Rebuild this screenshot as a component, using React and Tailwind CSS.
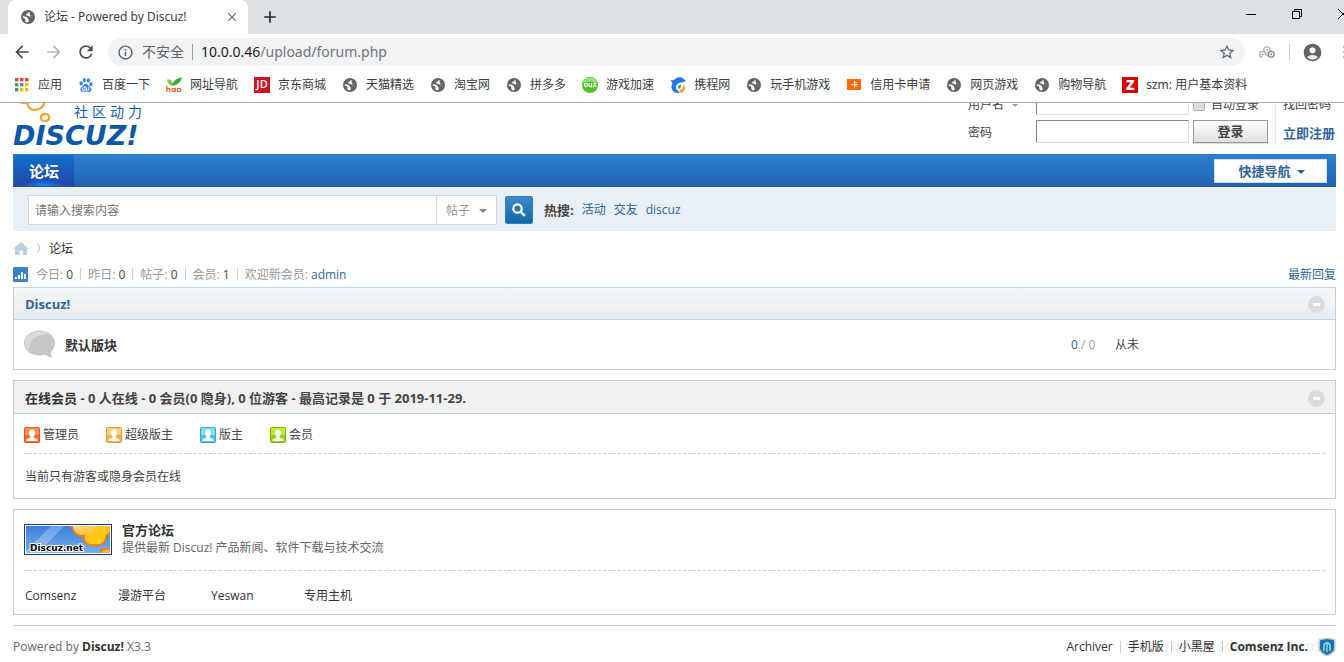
import React, { useState } from 'react';
import { MdArrowBack, MdArrowForward, MdRefresh, MdInfoOutline, MdStarBorder, MdAccountCircle, MdAdd, MdClose } from 'react-icons/md';
import { SiBaidu } from 'react-icons/si';

const Globe = () => (
  <svg viewBox="0 0 14 14" className="size-[14px] shrink-0">
    <circle cx="7" cy="7" r="7" fill="#5f6368" />
    <path d="M8.200 1.800L6.800 3.200c-.8.300-1.600.5-1.600 1.400 0 1 .8 1.400 2 1.400 1.400 0 2 .8 2 1.800 1.200 0 1.800.5 2.300 1.300.6-1.400.8-2.600.4-4.100-1.300.5-2.300.2-2.900-.6-.5-.9-.2-1.800-.8-2.600z" fill="#fff" />
    <path d="M1.700 6.200c1.600.1 3 .4 4.200 1.100 1 .7.6 1.500 1.500 2 .7.4.6 1.500-.3 3C4 12.300 1.600 9.800 1.700 6.200z" fill="#fff" />
    <path d="M9.200 4.600c1 .8 1.800.9 3 .4.4 1.500.2 2.900-.6 4.100-.5-.8-1.200-1.300-2.400-1.300z" fill="#5f6368" />
    <path d="M1.500 7.500c1.200.1 2.200.7 2.800 1.800.4.8.2 1.900-.1 2.400C2.500 10.800 1.500 9.300 1.500 7.500z" fill="#5f6368" />
  </svg>
);

const AppsIcon = () => (
  <svg viewBox="0 0 14 14" className="size-[14px]">
    {['#ea4335', '#ea4335', '#ea4335', '#34a853', '#4285f4', '#fbbc05', '#34a853', '#fbbc05', '#fbbc05'].map((c, i) => (
      <rect key={i} x={(i % 3) * 5} y={Math.floor(i / 3) * 5} width="3.4" height="3.4" fill={c} />
    ))}
  </svg>
);

const HaoIcon = () => (
  <svg viewBox="0 0 16 16" className="size-4">
    <path d="M1.5 2.5C4 2.5 6 4 6.6 6.2 8.4 3 11.8.9 16 .6 15.2 5.2 11 8.6 6 8.7 3.200 7.600 1.700 5.500 1.500 2.500z" fill="#3fae3a" />
    <path d="M1.500 2.500c3 .2 4.800 2 5.100 4.500L6 8.700C3.400 8 1.700 6 1.500 2.500z" fill="#8cc63f" />
    <g fill="none" stroke="#f26522" strokeWidth="1.200">
      <path d="M.8 8.500V15M.8 12.300c.6-1.400 3.200-1.400 3.200.4V15" />
      <ellipse cx="7.400" cy="13" rx="1.500" ry="1.600" />
      <path d="M9.200 11V15" />
      <ellipse cx="13" cy="13" rx="1.900" ry="1.600" />
    </g>
  </svg>
);

const JdIcon = () => (
  <span className="flex size-4 items-center justify-center bg-[#c81623] font-['Open_Sans'] text-[11px] font-semibold text-white">JD</span>
);

const SpeedIcon = () => (
  <svg viewBox="0 0 16 16" className="size-4">
    <circle cx="8" cy="8" r="8" fill="#4fc22b" />
    <path d="M1 5.500a7.500 7.500 0 0 1 14 0C10 4 6 4 1 5.500z" fill="#9be27f" />
    <g fill="none" stroke="#fff" strokeWidth="1.100">
      <circle cx="3.900" cy="8" r="1.600" />
      <path d="M7 6v2.600c0 1.300 2.500 1.300 2.500 0V6M9.500 8.500v2M11 6.500h3.500M12.700 5v2L11 10.500M12.700 7.500l1.900 2.500" />
    </g>
  </svg>
);

const DolphinIcon = () => (
  <svg viewBox="0 0 16 16" className="size-4">
    <path d="M.5 3.200C3 3.700 4.200 2.600 6 1.400 8.500-.2 12 0 14.200 2.400l1.500 1.400-2 1.400C10.500 4.800 6.800 6 6 9c-.4 2.200.6 4 2.300 4.600L9 16c-4.500.3-7.500-2.600-7.500-6 0-1.400.3-2.600 1-3.700z" fill="#2577e3" />
    <path d="M9 16c3.500-.3 6-2.500 6-5.300 0-1.300-.6-2.500-1.600-3.100.5 2.500-.6 5-3.600 5.700z" fill="#ff9a14" />
    <path d="M8 9.500c1-.6 1.500-1.500 3.200-1.700-.3 2-1.200 3.600-2.700 4.600z" fill="#2577e3" />
  </svg>
);

const CardIcon = () => (
  <span className="flex h-[11px] w-[14px] items-center justify-center bg-[#ff6a00]">
    <svg viewBox="0 0 8 8" className="size-[7px]">
      <path d="M4 0v8M4 2h3M0 4h8M4 4.500l3 2" stroke="#fff" fill="none" />
    </svg>
  </span>
);

const ZIcon = () => (
  <span className="flex size-4 items-center justify-center bg-[#d80000] font-['Open_Sans'] text-[14px] font-extrabold text-white">Z</span>
);

const bookmarks = [
  { label: '应用', icon: <AppsIcon /> },
  { label: '百度一下', icon: <SiBaidu className="size-[14px] text-[#3385ff]" /> },
  { label: '网址导航', icon: <HaoIcon /> },
  { label: '京东商城', icon: <JdIcon /> },
  { label: '天猫精选', icon: <Globe /> },
  { label: '淘宝网', icon: <Globe /> },
  { label: '拼多多', icon: <Globe /> },
  { label: '游戏加速', icon: <SpeedIcon /> },
  { label: '携程网', icon: <DolphinIcon /> },
  { label: '玩手机游戏', icon: <Globe /> },
  { label: '信用卡申请', icon: <CardIcon /> },
  { label: '网页游戏', icon: <Globe /> },
  { label: '购物导航', icon: <Globe /> },
  { label: 'szm: 用户基本资料', icon: <ZIcon /> },
];

const stats = [
  ['今日', '0'],
  ['昨日', '0'],
  ['帖子', '0'],
  ['会员', '1'],
];

const roles = [
  { label: '管理员', from: '#ff9257', to: '#f4511e' },
  { label: '超级版主', from: '#ffd071', to: '#e5973a' },
  { label: '版主', from: '#7fe0fb', to: '#2fa9d6' },
  { label: '会员', from: '#b9f01e', to: '#7cb800' },
];

function Browser() {
  return (
    <div className="border-b border-[#b0b0b0] bg-white font-['Noto_Sans','Noto_Sans_CJK_SC',sans-serif] text-[12px] text-[#3c4043]">
      <div className="flex h-[34px] overflow-hidden bg-[#dee1e6] pl-2">
        <div className="flex w-60 items-center rounded-t-lg bg-white pr-[9px] pl-[13px]">
          <Globe />
          <span className="ml-[9px] flex-1 whitespace-nowrap">论坛 - Powered by Discuz!</span>
          <button aria-label="关闭标签页"><MdClose className="size-[14px] text-[#5f6368]" /></button>
        </div>
        <button aria-label="新标签页" className="ml-3"><MdAdd className="size-5 text-[#2b2d30]" /></button>
        <div className="-mr-[22px] ml-auto flex h-7">
          <button aria-label="最小化" className="flex w-[46px] items-center justify-center">
            <svg viewBox="0 0 10 10" className="size-[10px]"><path d="M0 5.500h10" stroke="#000" /></svg>
          </button>
          <button aria-label="还原" className="flex w-[46px] items-center justify-center">
            <svg viewBox="0 0 10 10" className="size-[10px]"><path d="M.5 2.500h7v7h-7zM2.500 2.500v-2h7v7h-2" stroke="#000" fill="none" /></svg>
          </button>
          <button aria-label="关闭" className="flex w-[46px] items-center justify-center">
            <svg viewBox="0 0 10 10" className="size-[10px]"><path d="M0 0l10 10M10 0L0 10" stroke="#000" /></svg>
          </button>
        </div>
      </div>
      <div className="flex h-9 items-center overflow-hidden pl-3">
        <button aria-label="后退"><MdArrowBack className="size-5 text-[#4a4d51]" /></button>
        <button aria-label="前进" className="ml-3"><MdArrowForward className="size-5 text-[#b4b6b9]" /></button>
        <button aria-label="重新加载" className="ml-3"><MdRefresh className="size-5 text-[#4a4d51]" /></button>
        <div className="ml-3 flex h-7 flex-1 items-center rounded-full bg-[#f1f3f4] pr-[9px] pl-[9px] text-[14px]">
          <MdInfoOutline className="size-[17px] text-[#5f6368]" />
          <span className="ml-2 pb-px text-[#5f6368]">不安全</span>
          <span className="mx-2 h-4 w-px bg-[#9aa0a6]" />
          <span className="pb-[2px] text-[#202124]">10.0.0.46<span className="text-[#73777c]">/upload/forum.php</span></span>
          <button aria-label="收藏" className="ml-auto"><MdStarBorder className="size-[18px] text-[#5f6368]" /></button>
        </div>
        <svg viewBox="0 0 16 12" className="ml-[14px] h-3 w-4" fill="none">
          <circle cx="8" cy="4" r="3.200" stroke="#b8b8b8" strokeWidth="1.300" />
          <circle cx="8" cy="4" r="1" fill="#bbb" />
          <path d="M3.500 11.200a2.900 2.900 0 1 1 2.800-3.500" stroke="#b0b0b0" strokeWidth="1.300" />
          <circle cx="3.600" cy="8.600" r="1" fill="#999" />
          <path d="M6 8l3.500 2.500" stroke="#999" />
          <circle cx="12.200" cy="8.300" r="2.900" stroke="#8a8a8a" strokeWidth="1.300" />
          <circle cx="12.200" cy="8.300" r="1" fill="#888" />
        </svg>
        <span className="mr-3 ml-[14px] h-4 w-px bg-[#cdcfd2]" />
        <MdAccountCircle className="size-[21px] text-[#5f6368]" />
        <svg viewBox="0 0 4 16" className="-mr-[3px] ml-5 h-4 w-1" fill="#5f6368">
          <circle cx="2" cy="3" r="1.500" /><circle cx="2" cy="8" r="1.500" /><circle cx="2" cy="13" r="1.500" />
        </svg>
      </div>
      <nav className="flex h-8 items-center gap-4 overflow-hidden pb-[3px] pl-[14px] whitespace-nowrap">
        {bookmarks.map((b) => (
          <a key={b.label} href="#" className="flex items-center gap-2">
            <span className="flex size-4 shrink-0 items-center justify-center">{b.icon}</span>
            {b.label}
          </a>
        ))}
      </nav>
    </div>
  );
}

function Logo() {
  return (
    <svg viewBox="0 0 130 43" className="h-[43px] w-[130px]" role="img" aria-label="Discuz! 社区动力">
      <g fill="none" stroke="#f3a536" strokeWidth="2.400">
        <path d="M7-1c3 1 5 1.500 7.500 1 .5 4 3 7 7.500 7 5.500-.3 9-4 9.500-8" />
        <ellipse cx="32" cy="14.500" rx="4.200" ry="3.500" />
      </g>
      <text fontSize="14" fill="#1460ad" fontFamily="Noto Sans CJK SC, sans-serif">
        <tspan x="61" y="14">社</tspan><tspan x="79" y="14">区</tspan><tspan x="97" y="14">动</tspan><tspan x="115" y="14">力</tspan>
      </text>
      <text x="0" y="42" fontSize="27" fontWeight="700" fontStyle="italic" fill="#0b58a8" fontFamily="DejaVu Sans, sans-serif">DISCUZ!</text>
    </svg>
  );
}

function Header() {
  return (
    <header className="flex h-[51px] items-end justify-between overflow-hidden">
      <div className="pb-2"><Logo /></div>
      <form className="flex pb-[9px]" onSubmit={(e) => e.preventDefault()}>
        <div className="grid grid-cols-[68px_153px_75px] gap-y-[5px] pb-[2px]">
          <label htmlFor="user" className="flex items-center pt-[3px]">用户名
            <svg viewBox="0 0 6 3" className="ml-2 h-[3px] w-[6px]"><path d="M0 0h6L3 3z" fill="#999" /></svg>
          </label>
          <input id="user" className="h-[23px] border border-t-[#848484] border-r-[#e0e0e0] border-b-[#e0e0e0] border-l-[#848484] px-1" />
          <label className="ml-1 flex items-center gap-[6px] pt-[3px] whitespace-nowrap">
            <input type="checkbox" className="size-3 appearance-none rounded-xs border border-[#b0b0b0] bg-[#dedede]" />
            自动登录
          </label>
          <label htmlFor="pass" className="pt-1">密码</label>
          <input id="pass" type="password" className="h-[23px] border border-t-[#848484] border-r-[#e0e0e0] border-b-[#e0e0e0] border-l-[#848484] px-1" />
          <button className="ml-1 h-[23px] w-[75px] border border-[#999] bg-linear-to-b from-white to-[#e0e0e0] text-[13px] leading-[21px] font-bold shadow-[0_1px_0_#ddd]">登录</button>
        </div>
        <div className="ml-[11px] grid gap-y-[5px] border-l border-[#e3ebf2] pb-[2px] pl-[7px]">
          <a href="#" className="h-[23px] pt-1">找回密码</a>
          <a href="#" className="h-[23px] w-[53px] pt-1 text-[13px] font-bold whitespace-nowrap text-[#336699]">立即注册</a>
        </div>
      </form>
    </header>
  );
}

function Toggle() {
  return (
    <button aria-label="收起" className="mr-[10px] flex size-[17px] items-center justify-center rounded-full bg-[#dcdcdc]">
      <span className="h-[3px] w-[7px] bg-white" />
    </button>
  );
}

function RoleIcon({ from, to }) {
  return (
    <svg viewBox="0 0 16 16" className="size-4">
      <rect x=".5" y=".5" width="15" height="15" rx="1" fill={from} stroke={to} />
      <path d="M1 8h14v7H1z" fill={to} opacity=".6" />
      <path d="M8 2.500c2 0 3 1.400 3 3.200 0 1.500-.6 2.800-1.400 3.500v1.300l3.900 1.700V14h-11v-1.800l3.900-1.700V9.200C5.600 8.500 5 7.200 5 5.700c0-1.800 1-3.200 3-3.200z" fill="#fff" />
    </svg>
  );
}

function PartnerLogo() {
  return (
    <svg viewBox="0 0 88 31" className="h-[31px] w-[88px]" role="img" aria-label="Discuz.net">
      <defs>
        <linearGradient id="sky" x1="0" y1="0" x2="0" y2="1">
          <stop offset="0" stopColor="#3a80dc" /><stop offset="1" stopColor="#75adf0" />
        </linearGradient>
        <linearGradient id="sun" x1="0" y1="0" x2="1" y2="1">
          <stop offset="0" stopColor="#ffe0b0" /><stop offset=".5" stopColor="#ffc21c" /><stop offset="1" stopColor="#ffdf00" />
        </linearGradient>
        <clipPath id="inner"><rect x="2" y="2" width="84" height="27" /></clipPath>
      </defs>
      <rect width="88" height="31" fill="#173f7a" />
      <rect x="1" y="1" width="86" height="29" fill="#fff" />
      <g clipPath="url(#inner)">
        <rect x="2" y="2" width="84" height="27" fill="url(#sky)" />
        <path d="M27 2h13L14 29H2v-2z" fill="#fff" opacity=".25" />
        <path d="M47 0c2 8 6 13 13 12 0 7 4 10 10 9 7 1 12-2 12-9 2-1 4-3 5-5V0z" fill="url(#sun)" stroke="#f07d17" strokeWidth="2" />
        <ellipse cx="83" cy="29" rx="6" ry="4.500" fill="#ffb347" stroke="#f07d17" strokeWidth="2" />
      </g>
      <text x="6" y="27" fontSize="9" fontWeight="700" fill="#000" stroke="#fff" strokeWidth="2" paintOrder="stroke" fontFamily="DejaVu Sans, sans-serif">Discuz.net</text>
    </svg>
  );
}

function App() {
  const [keyword, setKeyword] = useState('');

  return (
    <div className="bg-white">
      <Browser />
      <div className="pr-2 pl-[13px] font-['Open_Sans','Noto_Sans_CJK_SC',sans-serif] text-[12px] leading-[18px] text-[#444]">
        <Header />

        {/* Main nav */}
        <nav className="flex h-[33px] items-center justify-between border-t border-b border-t-[#2b7acd] border-b-[#1d589f] bg-linear-to-b from-[#2e80d3] to-[#2062b0] pr-[9px]">
          <a href="#" className="ml-px flex h-full w-[60px] items-center justify-center bg-[radial-gradient(ellipse_22px_6px_at_bottom,#0a8cff,transparent),linear-gradient(#1072cc,#2344a8)] text-[15px] font-bold text-white">论坛</a>
          <button className="flex h-6 w-[113px] items-center justify-center gap-[6px] border border-[#cfe0f0] bg-white pl-[2px] text-[13px] font-bold text-[#336699]">
            快捷导航
            <svg viewBox="0 0 8 4" className="mt-[2px] h-1 w-2"><path d="M0 0h8L4 4z" fill="#0368b0" /></svg>
          </button>
        </nav>

        {/* Search */}
        <form className="mt-px flex h-[43px] items-center bg-[#e8eff5] pt-px pl-[15px]" onSubmit={(e) => e.preventDefault()}>
          <div className="flex h-[30px] w-[469px] border border-[#cbdce3] bg-white">
            <input
              aria-label="搜索"
              className="min-w-0 flex-1 px-[6px] pt-[2px] outline-none placeholder:text-[#757575]"
              placeholder="请输入搜索内容"
              value={keyword}
              onChange={(e) => setKeyword(e.target.value)}
            />
            <div className="relative w-[60px] border-l border-[#cbdce3]">
              <select aria-label="类型" className="h-full w-full appearance-none pt-[2px] pl-[9px] text-[#999]">
                <option>帖子</option>
              </select>
              <svg viewBox="0 0 8 4" className="pointer-events-none absolute top-[13px] right-[9px] h-1 w-2"><path d="M0 0h8L4 4z" fill="#888" /></svg>
            </div>
          </div>
          <button aria-label="搜索" className="ml-2 flex size-7 items-center justify-center rounded-xs border border-[#2f7fbd] bg-linear-to-b from-[#3a8acb] to-[#1067a5]">
            <svg viewBox="0 0 14 14" className="size-[14px]" fill="none" stroke="#fff">
              <circle cx="5.500" cy="5.500" r="4.200" strokeWidth="2.200" /><path d="M8.800 8.800l4 4" strokeWidth="2.600" />
            </svg>
          </button>
          <strong className="ml-[11px] text-[13px]">热搜:</strong>
          <div className="ml-2 flex gap-2 text-[#336699]">
            <a href="#">活动</a><a href="#">交友</a><a href="#">discuz</a>
          </div>
        </form>

        <div className="flex h-[34px] items-center">
          <a href="#" aria-label="首页">
            <svg viewBox="0 0 16 13" className="h-[13px] w-4"><path d="M8 0l8 7h-2v6h-4V8.500H6.500V13H2V7H0z" fill="#bccfdc" /></svg>
          </a>
          <svg viewBox="0 0 5 10" className="mx-2 h-[10px] w-1"><path d="M1 0l3 5-3 5" stroke="#aaa" fill="none" /></svg>
          <a href="#" className="pt-px text-[#333]">论坛</a>
        </div>

        <div className="mb-1 flex h-[18px] items-center text-[#999]">
          <svg viewBox="0 0 15 15" className="mr-2 size-[15px]">
            <rect width="15" height="15" rx="1" fill="#4080c8" />
            <path d="M2 10h2v2H2zM5 8h2v4H5zM8 5h2v7H8zM11 7h2v5h-2z" fill="#fff" />
          </svg>
          {stats.map(([label, value]) => (
            <span key={label} className="flex items-center">
              <span className="pt-px">{label}: <em className="text-[#444] not-italic">{value}</em></span>
              <i className="mx-[7px] h-3 w-px bg-[#d0d0d0]" />
            </span>
          ))}
          <span className="pt-px">欢迎新会员: <a href="#" className="text-[#336699]">admin</a></span>
          <a href="#" className="ml-auto pt-px text-[#336699]">最新回复</a>
        </div>

        {/* Board list */}
        <section className="border border-[#cdcdcd] border-t-[#c2d5e3]">
          <div className="flex h-8 items-center justify-between border-b border-[#c2d5e3] bg-linear-to-b from-[#f4f8fa] to-[#e6edf2] pt-px">
            <h2 className="pl-[11px] text-[13px] font-bold"><a href="#" className="text-[#336699]">Discuz!</a></h2>
            <Toggle />
          </div>
          <table className="w-full">
            <tbody>
              <tr className="h-[49px]">
                <td className="w-[51px] pl-[10px]">
                  <svg viewBox="0 0 31 29" className="h-[29px] w-[31px]">
                    <path d="M15.500.5C24 .5 31 6 31 13c0 3.600-1.800 6.500-3.800 8.700l.3 6.300-6.500-3.300c-1.700.5-3.500.8-5.500.8C7 25.500 0 20 0 13S7 .5 15.500.5z" fill="#c6c6c6" />
                    <path d="M5 20C5 10 12 4 25 4 22 2 19 1.500 15.500 1.500 7.500 1.500 1 6.500 1 13c0 3 1.500 5.500 4 7z" fill="#dadada" />
                  </svg>
                </td>
                <td className="pt-px"><a href="#" className="text-[13px] font-bold text-[#333]">默认版块</a></td>
                <td className="w-11 pt-px text-[#999]"><span className="text-[#336699]">0</span> / 0</td>
                <td className="w-[220px] pt-px">从未</td>
              </tr>
            </tbody>
          </table>
        </section>

        {/* Who is online */}
        <section className="mt-[10px] border border-[#cdcdcd]">
          <div className="flex h-[33px] items-center justify-between border-t border-b border-t-white border-b-[#c2d5dc] bg-[#f1f1f1] pt-px">
            <h3 className="pl-[11px] text-[13px] font-bold">
              <a href="#" className="text-[#333]">在线会员</a> - 0 人在线 - 0 会员(0 隐身), 0 位游客 - 最高记录是 0 于 2019-11-29.
            </h3>
            <Toggle />
          </div>
          <div className="px-[10px]">
            <div className="flex h-10 items-center gap-[27px] border-b border-dashed border-[#cdcdcd] pt-[2px]">
              {roles.map((r) => (
                <span key={r.label} className="flex items-center gap-[3px]"><RoleIcon from={r.from} to={r.to} />{r.label}</span>
              ))}
            </div>
            <p className="flex h-11 items-center pt-[2px] pl-px">当前只有游客或隐身会员在线</p>
          </div>
        </section>

        {/* Friend links */}
        <section className="mt-[10px] border border-[#cdcdcd] px-[10px]">
          <div className="flex h-[61px] gap-[10px] border-b border-dashed border-[#cdcdcd] pt-[11px]">
            <div className="pt-[3px]"><PartnerLogo /></div>
            <div>
              <h5 className="text-[13px] font-bold"><a href="#" className="text-[#333]">官方论坛</a></h5>
              <p className="text-[#666]">提供最新 Discuz! 产品新闻、软件下载与技术交流</p>
            </div>
          </div>
          <div className="flex h-[43px] items-center pt-[7px] pl-px text-[#333]">
            {['Comsenz', '漫游平台', 'Yeswan', '专用主机'].map((name) => (
              <a key={name} href="#" className="w-[93px]">{name}</a>
            ))}
          </div>
        </section>

        <footer className="relative mt-[10px] flex items-center justify-between border-t border-[#cdcdcd] pt-[11px] text-[#666]">
          <p>Powered by <strong className="text-[#333]">Discuz!</strong> X3.3</p>
          <div className="flex items-center text-[#333]">
            <a href="#">Archiver</a>
            <i className="mx-[7px] h-3 w-px bg-[#ccc]" />
            <a href="#">手机版</a>
            <i className="mx-[7px] h-3 w-px bg-[#ccc]" />
            <a href="#">小黑屋</a>
            <i className="mx-[7px] h-3 w-px bg-[#ccc]" />
            <strong>Comsenz Inc.</strong>
            <svg viewBox="0 0 18 20" className="ml-[10px] h-5 w-[18px]">
              <path d="M9 .5L17.500 2v9c0 4-3.500 6.500-8.500 8.500C4 17.500.5 15 .5 11V2z" fill="#c5cbd0" />
              <path d="M9 2l7 1.300V11c0 3-3 5.200-7 6.900C5 16.200 2 14 2 11V3.300z" fill="#1878b4" />
              <path d="M6 14V9a3 3 0 0 1 6 0v5M9 7v8" stroke="#b8e2f5" strokeWidth="1.300" fill="none" />
            </svg>
          </div>
          <span className="pointer-events-none absolute right-0 bottom-[3px] font-['Open_Sans'] text-[15px] text-black/10">https://blog.csdn.net/nainnssz</span>
        </footer>
      </div>
    </div>
  );
}

export default App;
